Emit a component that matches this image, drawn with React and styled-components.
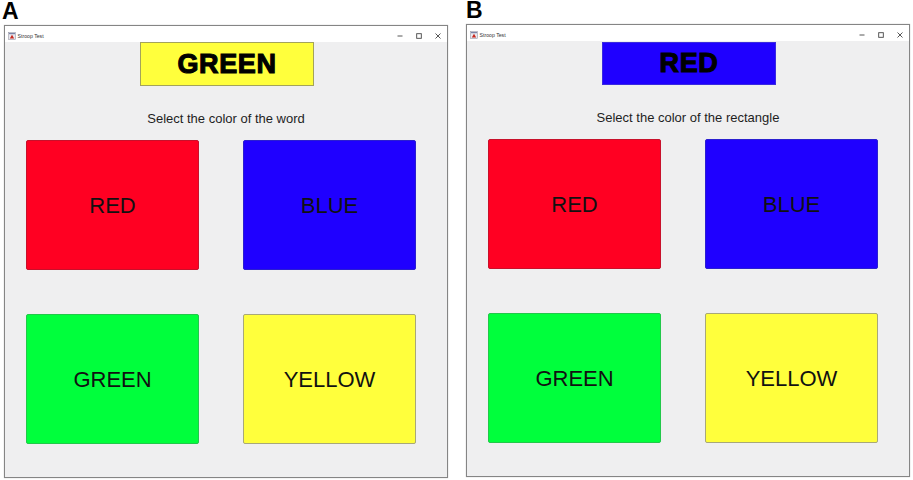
import React from "react";
import styled, { createGlobalStyle } from "styled-components";

const Global = createGlobalStyle`
  html, body { margin: 0; padding: 0; background: #fff; }
  body { width: 913px; height: 480px; overflow: hidden; font-family: "Liberation Sans", Arial, sans-serif; }
`;

const Figure = styled.div`
  display: flex;
  gap: 18px;
  padding-left: 4px;
  align-items: flex-start;
`;

const Panel = styled.section`
  width: 444px;
  display: flex;
  flex-direction: column;
`;

const PanelLabel = styled.div`
  height: ${(p) => p.$height}px;
  line-height: ${(p) => p.$height - 3}px;
  margin-left: ${(p) => p.$indent}px;
  font-size: 23px;
  font-weight: 700;
  color: #000;
`;

const Window = styled.div`
  height: 453px;
  box-sizing: border-box;
  border: 1px solid #858585;
  background: #efeff0;
  display: flex;
  flex-direction: column;
  box-shadow: 0 0 1px #b5b5b5;
`;

const TitleBar = styled.header`
  height: 16px;
  box-sizing: border-box;
  flex: none;
  background: #fff;
  display: flex;
  align-items: center;
  padding: 3px 5px 0 3px;
  gap: 1.5px;
`;

const AppIcon = styled.svg`
  width: 8px;
  height: 8px;
  flex: none;
`;

const Title = styled.span`
  font-size: 5.2px;
  line-height: 8px;
  color: #333;
  flex: 1;
  white-space: nowrap;
`;

const Controls = styled.div`
  display: flex;
  gap: 11px;
  align-items: center;
`;

const ControlIcon = styled.svg`
  width: 8px;
  height: 8px;
  display: block;
  stroke: #444;
  stroke-width: 0.9;
  fill: none;
`;

const Content = styled.div`
  flex: 1;
  display: flex;
  flex-direction: column;
  align-items: center;
`;

const Stimulus = styled.div`
  width: 174px;
  height: ${(p) => p.$height}px;
  box-sizing: border-box;
  margin-top: ${(p) => 44 - p.$height}px;
  margin-left: 2px;
  background: ${(p) => p.$bg};
  border: 1px solid ${(p) => p.$edge};
  display: flex;
  align-items: center;
  justify-content: center;
  font-size: 27px;
  font-weight: 700;
  letter-spacing: 0.6px;
  color: #000;
  -webkit-text-stroke: 1.1px #000;
`;

const Prompt = styled.div`
  margin-top: 25px;
  height: 16px;
  line-height: 16px;
  font-size: 13px;
  color: #1e1e1e;
`;

const Choices = styled.div`
  margin-top: 13px;
  align-self: flex-start;
  margin-left: 21px;
  display: grid;
  grid-template-columns: 173px 173px;
  grid-auto-rows: 130px;
  column-gap: 44px;
  row-gap: 44px;
`;

const Choice = styled.button`
  border: 1px solid ${(p) => p.$edge};
  border-radius: 2px;
  padding: 2px 0 0;
  background: ${(p) => p.$bg};
  font-family: inherit;
  font-size: 22px;
  color: #111;
`;

const choices = [
  { label: "RED", bg: "#ff0022", edge: "#c8102a" },
  { label: "BLUE", bg: "#1f00ff", edge: "#2a1fd0" },
  { label: "GREEN", bg: "#00ff3c", edge: "#22c84a" },
  { label: "YELLOW", bg: "#ffff3c", edge: "#a8a878" },
];

function StroopWindow({ word, bg, edge, height, prompt }) {
  return (
    <Window>
      <TitleBar>
        <AppIcon viewBox="0 0 8 8">
          <rect x="0.5" y="0.5" width="7" height="7" fill="#e8e8ee" stroke="#9a9aa8" strokeWidth="0.6" />
          <rect x="1" y="1" width="6" height="1.2" fill="#7c86a8" />
          <path d="M4 2.8 L6.2 6.6 H1.8 Z" fill="#c8281e" />
        </AppIcon>
        <Title>Stroop Test</Title>
        <Controls>
          <ControlIcon viewBox="0 0 8 8"><path d="M1.5 4 H6.5" /></ControlIcon>
          <ControlIcon viewBox="0 0 8 8"><rect x="1.7" y="1.7" width="4.6" height="4.6" /></ControlIcon>
          <ControlIcon viewBox="0 0 8 8"><path d="M1.5 1.5 L6.5 6.5 M6.5 1.5 L1.5 6.5" /></ControlIcon>
        </Controls>
      </TitleBar>
      <Content>
        <Stimulus $bg={bg} $edge={edge} $height={height}>{word}</Stimulus>
        <Prompt>{prompt}</Prompt>
        <Choices>
          {choices.map((c) => (
            <Choice key={c.label} $bg={c.bg} $edge={c.edge}>{c.label}</Choice>
          ))}
        </Choices>
      </Content>
    </Window>
  );
}

export default function App() {
  return (
    <>
      <Global />
      <Figure>
        <Panel>
          <PanelLabel $height={25} $indent={-2}>A</PanelLabel>
          <StroopWindow word="GREEN" bg="#ffff3c" edge="#a3a35a" height={44} prompt="Select the color of the word" />
        </Panel>
        <Panel>
          <PanelLabel $height={24} $indent={0}>B</PanelLabel>
          <StroopWindow word="RED" bg="#1f00ff" edge="#3a2ae0" height={43} prompt="Select the color of the rectangle" />
        </Panel>
      </Figure>
    </>
  );
}
